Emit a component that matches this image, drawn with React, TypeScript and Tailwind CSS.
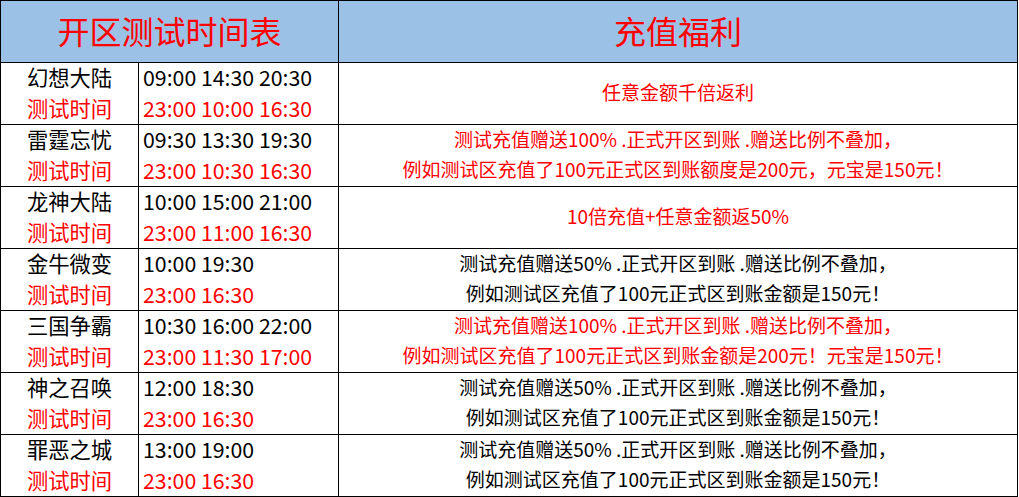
const rows = [
  { name: "幻想大陆", open: "09:00 14:30 20:30", test: "23:00 10:00 16:30", lines: ["任意金额千倍返利"], red: true },
  {
    name: "雷霆忘忧",
    open: "09:30 13:30 19:30",
    test: "23:00 10:30 16:30",
    lines: ["测试充值赠送100% .正式开区到账 .赠送比例不叠加，", "例如测试区充值了100元正式区到账额度是200元，元宝是150元！"],
    red: true,
  },
  { name: "龙神大陆", open: "10:00 15:00 21:00", test: "23:00 11:00 16:30", lines: ["10倍充值+任意金额返50%"], red: true },
  {
    name: "金牛微变",
    open: "10:00 19:30",
    test: "23:00 16:30",
    lines: ["测试充值赠送50% .正式开区到账 .赠送比例不叠加，", "例如测试区充值了100元正式区到账金额是150元！"],
    red: false,
  },
  {
    name: "三国争霸",
    open: "10:30 16:00 22:00",
    test: "23:00 11:30 17:00",
    lines: ["测试充值赠送100% .正式开区到账 .赠送比例不叠加，", "例如测试区充值了100元正式区到账金额是200元！元宝是150元！"],
    red: true,
  },
  {
    name: "神之召唤",
    open: "12:00 18:30",
    test: "23:00 16:30",
    lines: ["测试充值赠送50% .正式开区到账 .赠送比例不叠加，", "例如测试区充值了100元正式区到账金额是150元！"],
    red: false,
  },
  {
    name: "罪恶之城",
    open: "13:00 19:00",
    test: "23:00 16:30",
    lines: ["测试充值赠送50% .正式开区到账 .赠送比例不叠加，", "例如测试区充值了100元正式区到账金额是150元！"],
    red: false,
  },
];

export default function App() {
  return (
    <div className="bg-white w-[1019px] h-[497px] overflow-hidden [font-family:'Noto_Sans_CJK_SC',sans-serif]">
      <div className="grid grid-cols-[138px_200px_679px] auto-rows-[62px] w-[1018px] border-l border-t border-black">
        {/* Header */}
        <div className="col-span-2 bg-[#9bc2e6] border-r border-b border-black flex items-center justify-center pb-[3px] text-[32px] text-[#ff0000] leading-none">
          开区测试时间表
        </div>
        <div className="bg-[#9bc2e6] border-r border-b border-black flex items-center justify-center pb-[3px] text-[32px] text-[#ff0000] leading-none">
          充值福利
        </div>

        {rows.map((r) => (
          <div key={r.name} className="contents">
            <div className="border-r border-b border-black flex flex-col items-center justify-center pb-[4px] text-[21.3px] leading-[31px]">
              <span className="text-black">{r.name}</span>
              <span className="text-[#ff0000]">测试时间</span>
            </div>
            <div className="border-r border-b border-black flex flex-col justify-center pl-1 pb-[4px] text-[21.3px] leading-[31px]">
              <span className="text-black">{r.open}</span>
              <span className="text-[#ff0000]">{r.test}</span>
            </div>
            <div
              className={
                r.red
                  ? "border-r border-b border-black flex flex-col items-center justify-center pb-[4px] text-[19px] leading-[30px] text-[#ff0000]"
                  : "border-r border-b border-black flex flex-col items-center justify-center pb-[4px] text-[19px] leading-[30px] text-black"
              }
            >
              {r.lines.map((l) => (
                <span key={l} className="whitespace-pre">{l}</span>
              ))}
            </div>
          </div>
        ))}
      </div>
    </div>
  );
}
